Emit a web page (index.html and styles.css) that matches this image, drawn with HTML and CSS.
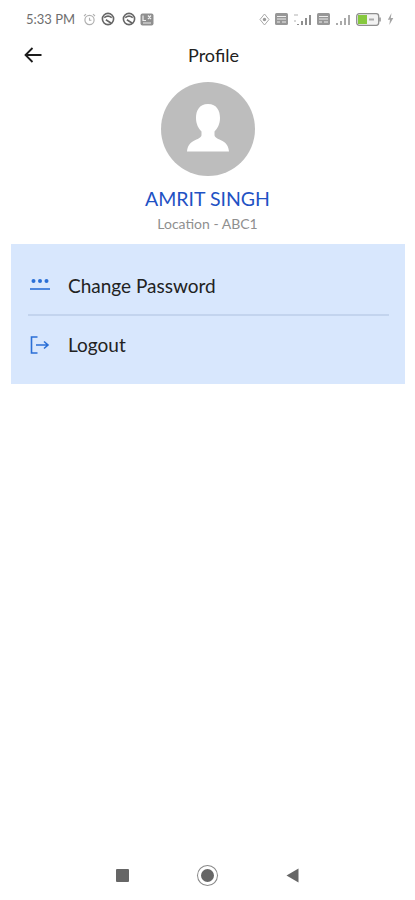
FILE: index.html
```html
<!DOCTYPE html>
<html lang="en">
<head>
    <meta charset="UTF-8">
    <meta name="viewport" content="width=device-width, initial-scale=1.0">
    <title>Profile</title>
    <link rel="stylesheet" href="styles.css">
</head>
<body>
    <div class="screen">

        <!-- Status bar -->
        <div class="status-bar">
            <div class="status-left">
                <span class="status-time">5:33 PM</span>
                <svg class="status-icon" width="13" height="13" viewBox="0 0 13 13">
                    <circle cx="6.5" cy="7" r="4.6" fill="none" stroke="#b0b0b0" stroke-width="1.2"/>
                    <path d="M6.5 4.8V7.3H8.4M1 3 3 1.2M12 3 10 1.2" fill="none" stroke="#b0b0b0" stroke-width="1.1"/>
                </svg>
                <svg class="status-icon" width="14" height="14" viewBox="0 0 13 13">
                    <circle cx="6.5" cy="6.5" r="5.2" fill="none" stroke="#666" stroke-width="1.5"/>
                    <path d="M3 5.2C5 3.6 8 3.6 10 5.2M4.5 7.2 9.6 10.4" fill="none" stroke="#666" stroke-width="1.5"/>
                </svg>
                <svg class="status-icon status-icon-gap" width="14" height="14" viewBox="0 0 13 13">
                    <circle cx="6.5" cy="6.5" r="5.2" fill="none" stroke="#666" stroke-width="1.5"/>
                    <path d="M3 5.2C5 3.6 8 3.6 10 5.2M4.5 7.2 9.6 10.4" fill="none" stroke="#666" stroke-width="1.5"/>
                </svg>
                <svg class="status-icon" width="14" height="13" viewBox="0 0 14 13">
                    <rect x="0.5" y="0.5" width="13" height="12" rx="2" fill="#8f8f8f"/>
                    <path d="M3 2.5V7.5H6M8 2.5 11 6M11 2.5 8 6M3 10H11" fill="none" stroke="#eee" stroke-width="1.2"/>
                </svg>
            </div>
            <div class="status-right">
                <svg width="11" height="13" viewBox="0 0 11 13">
                    <path d="M5.5 1 10 6.5 5.5 12 1 6.5Z" fill="none" stroke="#aaa" stroke-width="1"/>
                    <circle cx="5.5" cy="6.5" r="1.7" fill="#999"/>
                </svg>
                <svg width="13" height="12" viewBox="0 0 13 12">
                    <rect width="13" height="12" rx="1.5" fill="#979797"/>
                    <path d="M2 3.5H11M2 6H11M2 9H5M7 9H11" stroke="#eee" stroke-width="1.1"/>
                </svg>
                <svg width="19" height="13" viewBox="0 0 19 13">
                    <path d="M1 2H5M1 8H3" stroke="#ccc" stroke-width="1.4"/>
                    <path d="M4 11H6V12H4ZM8 8H10V12H8ZM12 5H14V12H12ZM16 2H18V12H16Z" fill="#8f8f8f"/>
                </svg>
                <svg width="13" height="12" viewBox="0 0 13 12">
                    <rect width="13" height="12" rx="1.5" fill="#979797"/>
                    <path d="M2 3.5H11M2 6H11M2 9H5M7 9H11" stroke="#eee" stroke-width="1.1"/>
                </svg>
                <svg width="16" height="12" viewBox="0 0 16 12">
                    <path d="M1 10H3V12H1ZM5 8H7V12H5ZM9 5H11V12H9ZM13 2H15V12H13Z" fill="#aaa"/>
                </svg>
                <svg width="26" height="13" viewBox="0 0 26 13">
                    <rect x="0.7" y="0.7" width="22" height="11.6" rx="2.5" fill="#f2f2f2" stroke="#8f8f8f" stroke-width="1.3"/>
                    <rect x="2" y="2" width="9" height="9" fill="#86c83e"/>
                    <path d="M13 6.5H18" stroke="#aaa" stroke-width="2"/>
                    <path d="M24 4.5V8.5" stroke="#8f8f8f" stroke-width="1.5"/>
                </svg>
                <svg width="7" height="12" viewBox="0 0 7 12">
                    <path d="M4.5 0 0.8 6.8H3L2.3 12 6.3 5H3.8Z" fill="#a5a5a5"/>
                </svg>
            </div>
        </div>

        <!-- Toolbar -->
        <header class="toolbar">
            <svg class="back-icon" width="18" height="16" viewBox="0 0 18 16">
                <path d="M17.5 8H1.5M8.5 1 1.5 8 8.5 15" fill="none" stroke="#1c1c1c" stroke-width="1.8"/>
            </svg>
            <h1 class="toolbar-title">Profile</h1>
        </header>

        <!-- User -->
        <section class="profile">
            <div class="avatar">
                <svg width="94" height="94" viewBox="0 0 94 94">
                    <path d="M47 22C38 22 35 29 35 36C35 42 37.5 46.5 40.5 49.5V53C40.5 55.5 36.5 57 32.5 59C28 61.5 26.5 65 26 69.5H68C67.5 65 66 61.5 61.5 59C57.5 57 53.5 55.5 53.5 53V49.5C56.5 46.5 59 42 59 36C59 29 56 22 47 22Z" fill="#fff"/>
                </svg>
            </div>
            <div class="profile-name">AMRIT SINGH</div>
            <div class="profile-location">Location - ABC1</div>
        </section>

        <!-- Menu -->
        <nav class="menu">
            <a class="menu-item">
                <svg class="menu-icon" width="20" height="14" viewBox="0 0 20 14">
                    <circle cx="3.5" cy="3" r="2" fill="#2a6fd6"/>
                    <circle cx="10" cy="3" r="2" fill="#2a6fd6"/>
                    <circle cx="16.5" cy="3" r="2" fill="#2a6fd6"/>
                    <path d="M0 11H20" stroke="#2a6fd6" stroke-width="1.6"/>
                </svg>
                <span>Change Password</span>
            </a>
            <div class="menu-divider"></div>
            <a class="menu-item">
                <svg class="menu-icon" width="20" height="18" viewBox="0 0 20 18">
                    <path d="M7.5 1H1.5V17H7.5" fill="none" stroke="#2a6fd6" stroke-width="1.6"/>
                    <path d="M6 9H18M14 5.5 18 9 14 12.5" fill="none" stroke="#2a6fd6" stroke-width="1.6"/>
                </svg>
                <span>Logout</span>
            </a>
        </nav>

        <!-- Navigation bar -->
        <div class="nav-bar">
            <span class="nav-square"></span>
            <span class="nav-circle"></span>
            <svg class="nav-back" width="13" height="15" viewBox="0 0 13 15">
                <path d="M12.5 0.5V14.5L0.5 7.5Z" fill="#666"/>
            </svg>
        </div>

    </div>
</body>
</html>
```

FILE: styles.css
```css
* {
    box-sizing: border-box;
}

body {
    margin: 0;
    padding: 0;
    background-color: #fff;
    color: #1f1f1f;
    font-family: Lato, "Noto Sans", sans-serif;
}

.screen {
    display: flex;
    flex-direction: column;
    height: 900px;
    overflow: hidden;
}

.status-bar {
    display: flex;
    justify-content: space-between;
    align-items: center;
    height: 20px;
    margin-top: 9px;
    padding: 0 21px 0 26px;
}

.status-left,
.status-right {
    display: flex;
    align-items: center;
}

.status-left {
    gap: 5px;
}

.status-right {
    gap: 5px;
}

.status-time {
    margin-right: 3px;
    font-size: 13px;
    color: #6e6e6e;
}

.status-icon-gap {
    margin: 0 -1px 0 2px;
}

.toolbar {
    position: relative;
    display: flex;
    justify-content: center;
    align-items: center;
    height: 36px;
    margin-top: 8px;
    padding-left: 12px;
}

.back-icon {
    position: absolute;
    left: 24px;
    top: 10px;
}

.toolbar-title {
    margin: 0;
    font-size: 18px;
    font-weight: 400;
    color: #222;
}

.profile {
    display: flex;
    flex-direction: column;
    align-items: center;
    margin-top: 9px;
}

.avatar {
    width: 94px;
    height: 94px;
    border-radius: 50%;
    background-color: #bdbdbd;
}

.avatar svg {
    display: block;
}

.profile-name {
    margin-top: 10px;
    font-size: 19.5px;
    line-height: 26px;
    color: #1f52c4;
}

.profile-location {
    margin-top: 3px;
    font-size: 14px;
    line-height: 18px;
    color: #8f8f8f;
}

.menu {
    margin: 11px 10px 0 11px;
    height: 140px;
    padding: 12px 16px 0 19px;
    background-color: #d8e7fd;
}

.menu-item {
    display: flex;
    align-items: center;
    height: 58px;
    font-size: 19px;
    color: #222;
}

.menu-icon {
    flex: none;
    margin-right: 18px;
}

.menu-divider {
    height: 1.5px;
    margin-left: -2px;
    background-color: #c3d4ee;
}

.nav-bar {
    display: flex;
    justify-content: center;
    align-items: center;
    gap: 69px;
    margin-top: auto;
    height: 20px;
    margin-bottom: 15px;
}

.nav-square {
    width: 13px;
    height: 13px;
    border-radius: 1px;
    background-color: #666;
}

.nav-circle {
    width: 19px;
    height: 19px;
    border: 3px solid #fff;
    border-radius: 50%;
    background-color: #666;
    box-shadow: 0 0 0 1px #888;
}
```
